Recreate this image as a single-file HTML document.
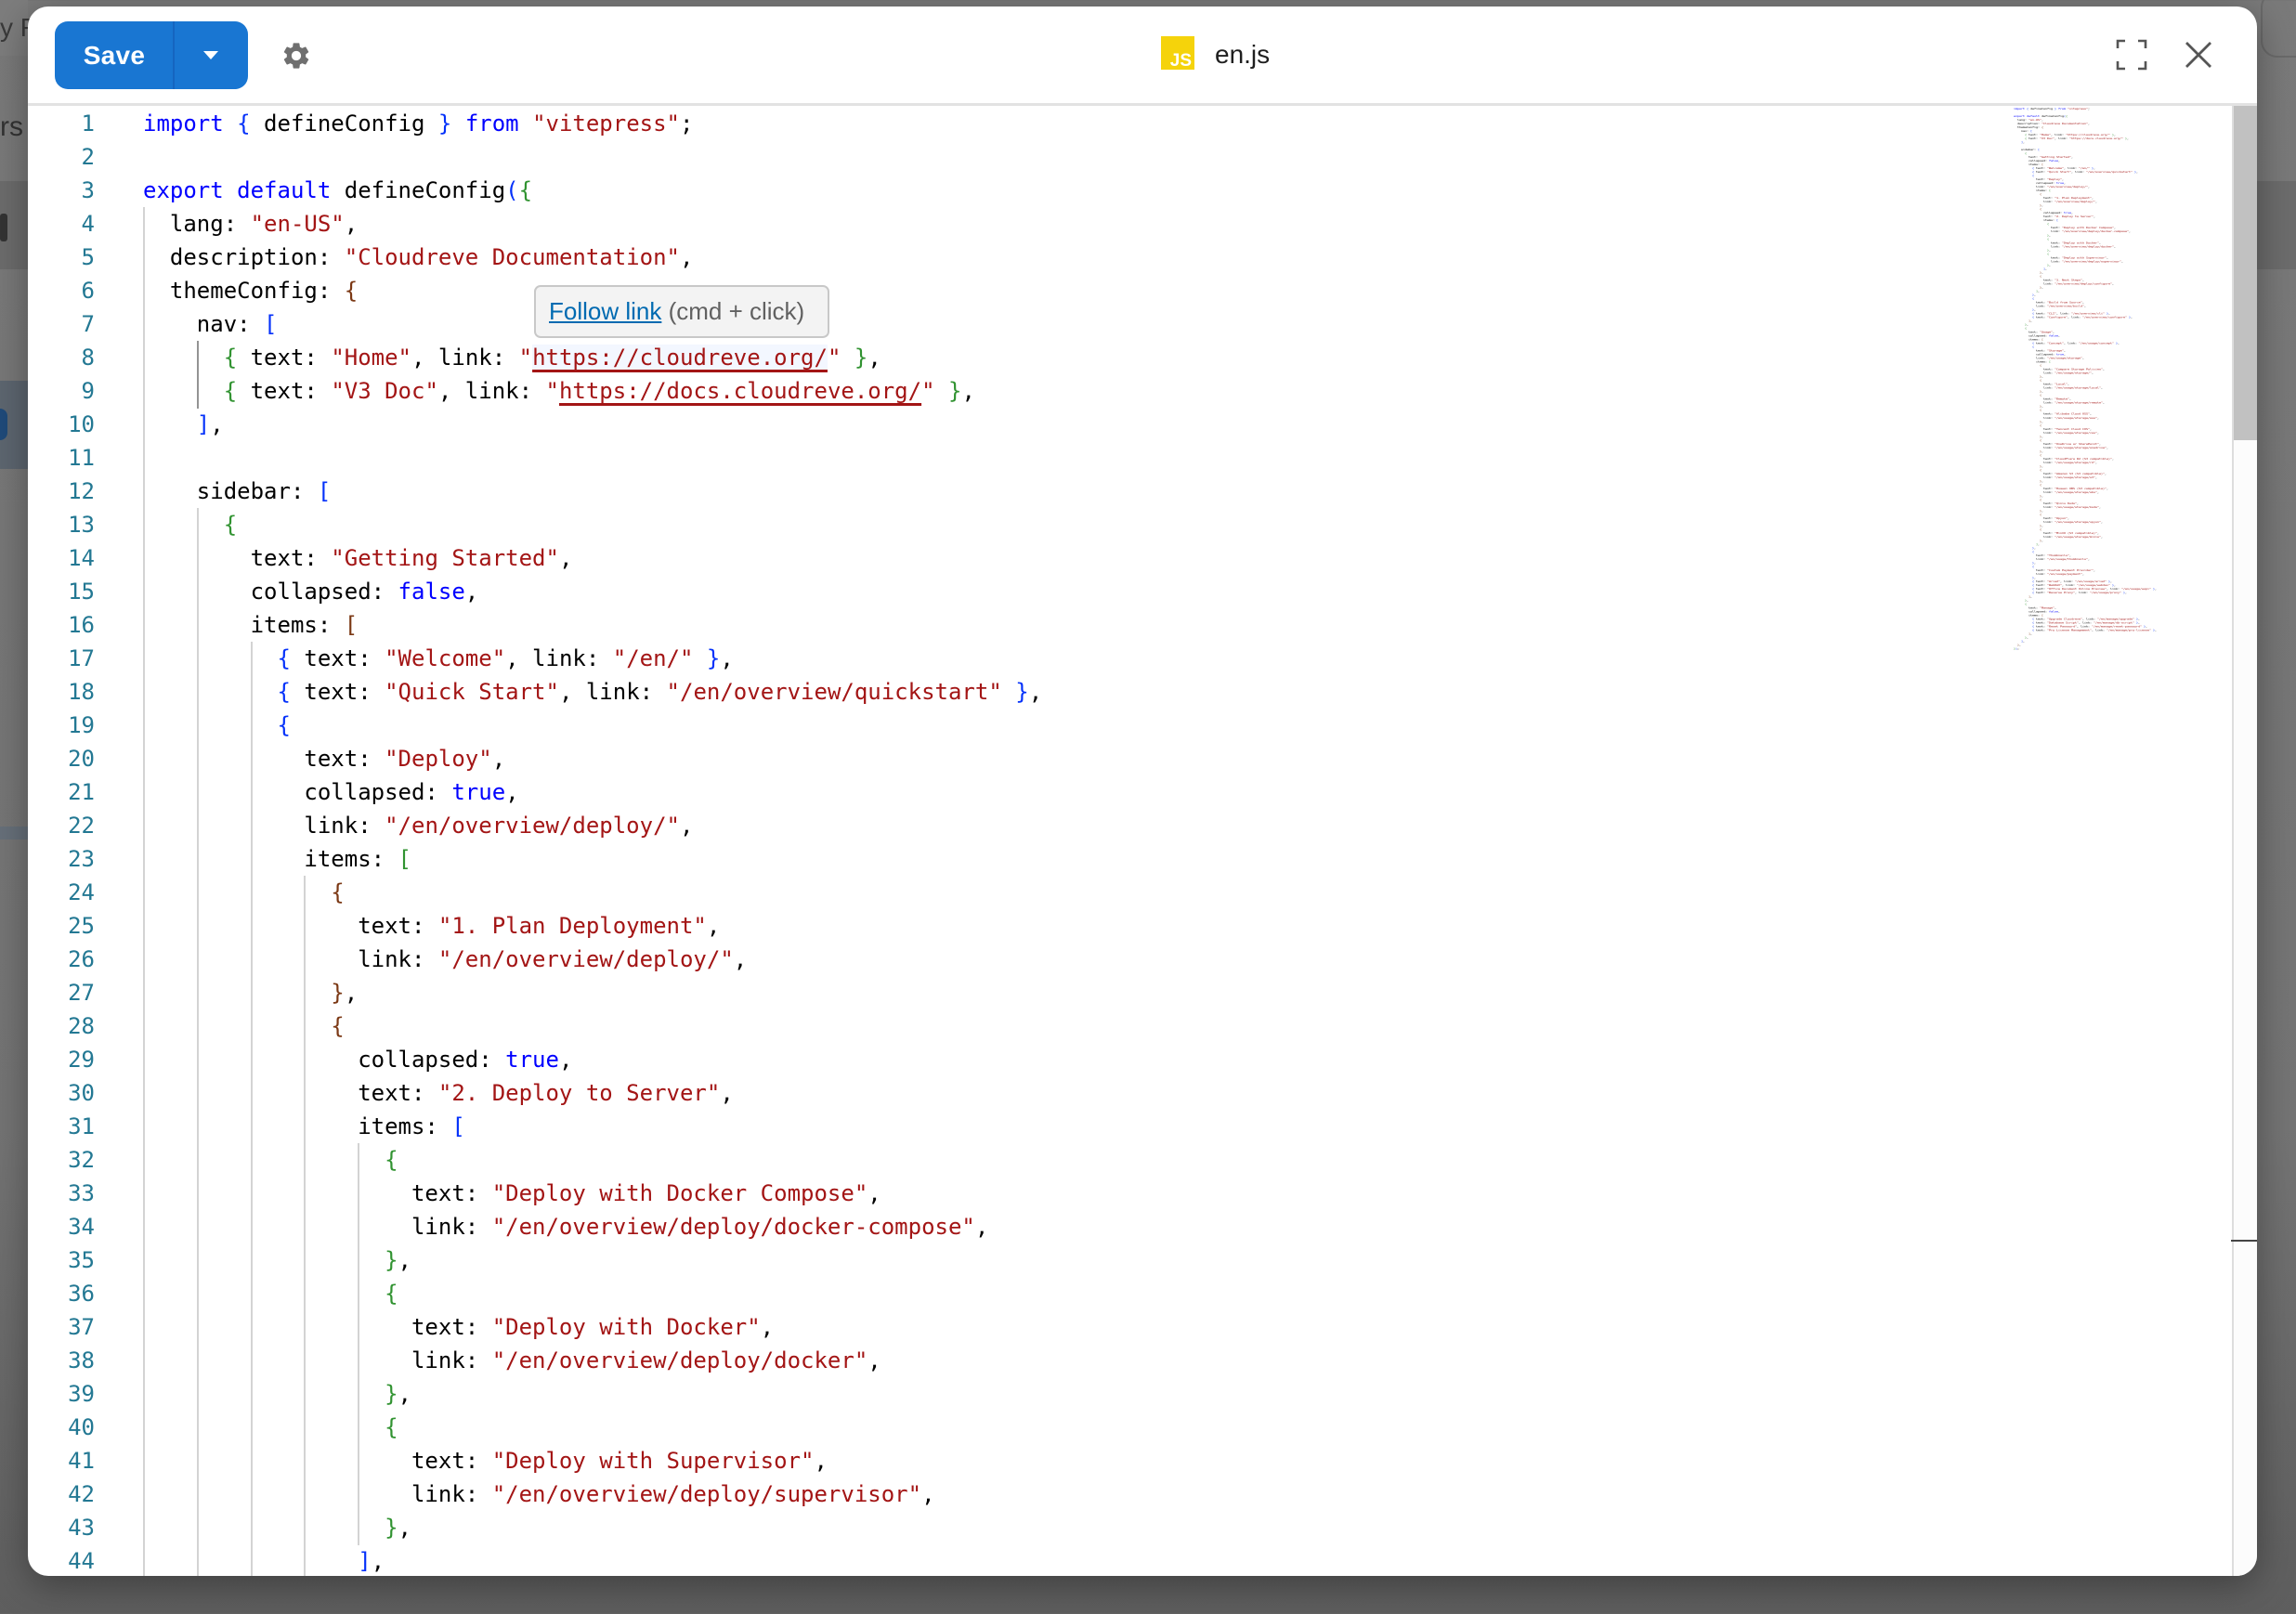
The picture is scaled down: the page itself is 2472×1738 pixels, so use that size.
<!DOCTYPE html>
<html><head><meta charset="utf-8">
<style>
html,body{margin:0;padding:0;}
body{width:2472px;height:1738px;overflow:hidden;position:relative;background:linear-gradient(#7a7a7a,#747474 70%,#5e5e5e);font-family:"Liberation Sans",sans-serif;}
.bgp{position:absolute;}
#dlg{position:absolute;left:30px;top:7px;width:2400px;height:1690px;background:#fff;border-radius:22px;overflow:hidden;box-shadow:0 10px 40px rgba(0,0,0,.35);}
#hdr{position:absolute;left:0;top:0;width:2400px;height:104px;border-bottom:3px solid #e2e2e2;}
#save{position:absolute;left:29px;top:16px;width:208px;height:73px;background:#1976d2;border-radius:14px;color:#fff;}
#save .t{position:absolute;left:0;top:0;width:128px;height:73px;line-height:73px;text-align:center;font-size:28px;font-weight:bold;letter-spacing:.3px}
#save .d{position:absolute;left:127px;top:0;width:2px;height:73px;background:#1565c0}
#save .c{position:absolute;left:160px;top:32px;width:0;height:0;border-left:8px solid transparent;border-right:8px solid transparent;border-top:9px solid #fff}
.code{position:absolute;font-family:"DejaVu Sans Mono","Liberation Mono",monospace;font-size:24px;color:#000;white-space:normal;}
.code div{height:36px;line-height:36px;white-space:pre;}
#gut{position:absolute;left:0;top:108px;width:72px;text-align:right;color:#237893;font-family:"DejaVu Sans Mono","Liberation Mono",monospace;font-size:24px;}
#gut div{height:36px;line-height:36px;}
#code{left:124px;top:108px;}
.k{color:#0000ff}.s{color:#a31515}.b1{color:#0431fa}.b2{color:#319331}.b3{color:#7b3814}
.u{text-decoration:underline;text-decoration-color:#a31515;text-decoration-thickness:3px;text-underline-offset:5px;background:#f3f7ff}
#guides .g{position:absolute;width:2px;background:#d3d3d3}
#mini{position:absolute;left:2138px;top:108px;transform-origin:0 0;transform:scale(0.1384,0.1114);}
#sb{position:absolute;left:2373px;top:107px;width:27px;height:1590px;background:#fcfcfc;border-left:2px solid #ddd}
#thumb{position:absolute;left:2375px;top:107px;width:27px;height:360px;background:#c1c1c1}
#tip{position:absolute;left:545px;top:300px;height:57px;background:#f3f3f3;border:2px solid #c8c8c8;border-radius:7px;font-size:26px;line-height:53px;padding-left:14px;box-sizing:border-box;width:318px;color:#616161;white-space:nowrap}
#tip a{color:#006ab1;text-decoration:underline}
</style></head><body>
<div class="bgp" style="left:0;top:0;width:30px;height:60px;background:#7d7d7d"></div>
<div class="bgp" style="left:0;top:14px;color:#3a3a3a;font-size:28px;">y F</div>
<div class="bgp" style="left:0;top:120px;color:#333;font-size:30px;">rs</div>
<div class="bgp" style="left:0;top:195px;width:30px;height:95px;background:#6c6c6c"></div>
<div class="bgp" style="left:0;top:230px;width:8px;height:30px;background:#333;border-radius:3px"></div>
<div class="bgp" style="left:0;top:410px;width:30px;height:95px;background:#5d6670"></div>
<div class="bgp" style="left:0;top:440px;width:8px;height:34px;background:#1f4a7a;border-radius:0 17px 17px 0"></div>
<div class="bgp" style="left:0;top:890px;width:30px;height:14px;background:#67707a"></div>
<div class="bgp" style="left:2430px;top:195px;width:42px;height:95px;background:#6c6c6c"></div>
<div class="bgp" style="left:2434px;top:-10px;width:60px;height:68px;border:2px solid #6a6a6a;border-radius:18px"></div>

<div id="dlg">
 <div id="hdr">
  <div id="save"><div class="t">Save</div><div class="d"></div><div class="c"></div></div>
  <svg style="position:absolute;left:272px;top:36px" width="34" height="34" viewBox="0 0 24 24"><path fill="#6f6f6f" d="M19.14 12.94c.04-.3.06-.61.06-.94 0-.32-.02-.64-.07-.94l2.030-1.58a.49.49 0 0 0 .12-.61l-1.920-3.32a.488.488 0 0 0-.59-.22l-2.39.96c-.5-.38-1.03-.7-1.62-.94l-.36-2.54a.484.484 0 0 0-.48-.41h-3.84c-.24 0-.43.17-.47.41l-.36 2.54c-.59.24-1.13.57-1.62.94l-2.39-.96c-.22-.08-.47 0-.59.22L2.74 8.87c-.12.21-.08.47.12.61l2.03 1.58c-.05.3-.09.63-.09.94s.02.64.07.94l-2.03 1.58a.49.49 0 0 0-.12.61l1.92 3.32c.12.22.37.29.59.22l2.39-.96c.5.38 1.03.7 1.62.94l.36 2.54c.05.24.24.41.48.41h3.84c.24 0 .44-.17.47-.41l.36-2.54c.59-.24 1.130-.56 1.62-.94l2.39.96c.22.08.47 0 .59-.22l1.92-3.320c.12-.22.07-.47-.12-.61l-2.01-1.58zM12 15.6c-1.98 0-3.6-1.62-3.6-3.6s1.62-3.6 3.6-3.6 3.6 1.62 3.6 3.6-1.62 3.6-3.6 3.6z"/></svg>
  <div style="position:absolute;left:1220px;top:32px;width:36px;height:36px;background:#f5d30b;"><span style="position:absolute;right:3px;bottom:0;font-size:19px;color:#fff;font-weight:bold;line-height:19px">JS</span></div>
  <div style="position:absolute;left:1278px;top:32px;font-size:28px;line-height:40px;color:#1f1f1f">en.js</div>
  <svg style="position:absolute;left:2248px;top:35px" width="34" height="34" viewBox="0 0 34 34" fill="none" stroke="#555" stroke-width="2.6"><path d="M2 10V2h8M24 2h8v8M32 24v8h-8M10 32H2v-8"/></svg>
  <svg style="position:absolute;left:2322px;top:37px" width="30" height="30" viewBox="0 0 30 30" stroke="#555" stroke-width="2.8"><path d="M2 2L28 28M28 2L2 28"/></svg>
 </div>

 <div id="gut"><div>1</div><div>2</div><div>3</div><div>4</div><div>5</div><div>6</div><div>7</div><div>8</div><div>9</div><div>10</div><div>11</div><div>12</div><div>13</div><div>14</div><div>15</div><div>16</div><div>17</div><div>18</div><div>19</div><div>20</div><div>21</div><div>22</div><div>23</div><div>24</div><div>25</div><div>26</div><div>27</div><div>28</div><div>29</div><div>30</div><div>31</div><div>32</div><div>33</div><div>34</div><div>35</div><div>36</div><div>37</div><div>38</div><div>39</div><div>40</div><div>41</div><div>42</div><div>43</div><div>44</div></div>

 <div id="guides"></div>

 <div id="code" class="code">
<div><span class="k">import</span> <span class="b1">{</span> defineConfig <span class="b1">}</span> <span class="k">from</span> <span class="s">"vitepress"</span>;</div>
<div></div>
<div><span class="k">export</span> <span class="k">default</span> defineConfig<span class="b1">(</span><span class="b2">{</span></div>
<div>  lang: <span class="s">"en-US"</span>,</div>
<div>  description: <span class="s">"Cloudreve Documentation"</span>,</div>
<div>  themeConfig: <span class="b3">{</span></div>
<div>    nav: <span class="b1">[</span></div>
<div>      <span class="b2">{</span> text: <span class="s">"Home"</span>, link: <span class="s">"<span class="u">https://cloudreve.org/</span>"</span> <span class="b2">}</span>,</div>
<div>      <span class="b2">{</span> text: <span class="s">"V3 Doc"</span>, link: <span class="s">"<span class="u" style="background:none">https://docs.cloudreve.org/</span>"</span> <span class="b2">}</span>,</div>
<div>    <span class="b1">]</span>,</div>
<div></div>
<div>    sidebar: <span class="b1">[</span></div>
<div>      <span class="b2">{</span></div>
<div>        text: <span class="s">"Getting Started"</span>,</div>
<div>        collapsed: <span class="k">false</span>,</div>
<div>        items: <span class="b3">[</span></div>
<div>          <span class="b1">{</span> text: <span class="s">"Welcome"</span>, link: <span class="s">"/en/"</span> <span class="b1">}</span>,</div>
<div>          <span class="b1">{</span> text: <span class="s">"Quick Start"</span>, link: <span class="s">"/en/overview/quickstart"</span> <span class="b1">}</span>,</div>
<div>          <span class="b1">{</span></div>
<div>            text: <span class="s">"Deploy"</span>,</div>
<div>            collapsed: <span class="k">true</span>,</div>
<div>            link: <span class="s">"/en/overview/deploy/"</span>,</div>
<div>            items: <span class="b2">[</span></div>
<div>              <span class="b3">{</span></div>
<div>                text: <span class="s">"1. Plan Deployment"</span>,</div>
<div>                link: <span class="s">"/en/overview/deploy/"</span>,</div>
<div>              <span class="b3">}</span>,</div>
<div>              <span class="b3">{</span></div>
<div>                collapsed: <span class="k">true</span>,</div>
<div>                text: <span class="s">"2. Deploy to Server"</span>,</div>
<div>                items: <span class="b1">[</span></div>
<div>                  <span class="b2">{</span></div>
<div>                    text: <span class="s">"Deploy with Docker Compose"</span>,</div>
<div>                    link: <span class="s">"/en/overview/deploy/docker-compose"</span>,</div>
<div>                  <span class="b2">}</span>,</div>
<div>                  <span class="b2">{</span></div>
<div>                    text: <span class="s">"Deploy with Docker"</span>,</div>
<div>                    link: <span class="s">"/en/overview/deploy/docker"</span>,</div>
<div>                  <span class="b2">}</span>,</div>
<div>                  <span class="b2">{</span></div>
<div>                    text: <span class="s">"Deploy with Supervisor"</span>,</div>
<div>                    link: <span class="s">"/en/overview/deploy/supervisor"</span>,</div>
<div>                  <span class="b2">}</span>,</div>
<div>                <span class="b1">]</span>,</div>
<div>              <span class="b3">}</span>,</div>
<div>              <span class="b3">{</span></div>
<div>                text: <span class="s">"3. Next Steps"</span>,</div>
<div>                link: <span class="s">"/en/overview/deploy/configure"</span>,</div>
<div>              <span class="b3">}</span>,</div>
<div>            <span class="b2">]</span>,</div>
<div>          <span class="b1">}</span>,</div>
<div>          <span class="b1">{</span></div>
<div>            text: <span class="s">"Build from Source"</span>,</div>
<div>            link: <span class="s">"/en/overview/build"</span>,</div>
<div>          <span class="b1">}</span>,</div>
<div>          <span class="b1">{</span> text: <span class="s">"CLI"</span>, link: <span class="s">"/en/overview/cli"</span> <span class="b1">}</span>,</div>
<div>          <span class="b1">{</span> text: <span class="s">"Configure"</span>, link: <span class="s">"/en/overview/configure"</span> <span class="b1">}</span>,</div>
<div>        <span class="b3">]</span>,</div>
<div>      <span class="b2">}</span>,</div>
<div>      <span class="b2">{</span></div>
<div>        text: <span class="s">"Usage"</span>,</div>
<div>        collapsed: <span class="k">false</span>,</div>
<div>        items: <span class="b3">[</span></div>
<div>          <span class="b1">{</span> text: <span class="s">"Concept"</span>, link: <span class="s">"/en/usage/concept"</span> <span class="b1">}</span>,</div>
<div>          <span class="b1">{</span></div>
<div>            text: <span class="s">"Storage"</span>,</div>
<div>            collapsed: <span class="k">true</span>,</div>
<div>            link: <span class="s">"/en/usage/storage"</span>,</div>
<div>            items: <span class="b2">[</span></div>
<div>              <span class="b3">{</span></div>
<div>                text: <span class="s">"Compare Storage Policies"</span>,</div>
<div>                link: <span class="s">"/en/usage/storage/"</span>,</div>
<div>              <span class="b3">}</span>,</div>
<div>              <span class="b3">{</span></div>
<div>                text: <span class="s">"Local"</span>,</div>
<div>                link: <span class="s">"/en/usage/storage/local"</span>,</div>
<div>              <span class="b3">}</span>,</div>
<div>              <span class="b3">{</span></div>
<div>                text: <span class="s">"Remote"</span>,</div>
<div>                link: <span class="s">"/en/usage/storage/remote"</span>,</div>
<div>              <span class="b3">}</span>,</div>
<div>              <span class="b3">{</span></div>
<div>                text: <span class="s">"Alibaba Cloud OSS"</span>,</div>
<div>                link: <span class="s">"/en/usage/storage/oss"</span>,</div>
<div>              <span class="b3">}</span>,</div>
<div>              <span class="b3">{</span></div>
<div>                text: <span class="s">"Tencent Cloud COS"</span>,</div>
<div>                link: <span class="s">"/en/usage/storage/cos"</span>,</div>
<div>              <span class="b3">}</span>,</div>
<div>              <span class="b3">{</span></div>
<div>                text: <span class="s">"OneDrive or SharePoint"</span>,</div>
<div>                link: <span class="s">"/en/usage/storage/onedrive"</span>,</div>
<div>              <span class="b3">}</span>,</div>
<div>              <span class="b3">{</span></div>
<div>                text: <span class="s">"CloudFlare R2 (S3 compatible)"</span>,</div>
<div>                link: <span class="s">"/en/usage/storage/r2"</span>,</div>
<div>              <span class="b3">}</span>,</div>
<div>              <span class="b3">{</span></div>
<div>                text: <span class="s">"Amazon S3 (S3 compatible)"</span>,</div>
<div>                link: <span class="s">"/en/usage/storage/s3"</span>,</div>
<div>              <span class="b3">}</span>,</div>
<div>              <span class="b3">{</span></div>
<div>                text: <span class="s">"Huawei OBS (S3 compatible)"</span>,</div>
<div>                link: <span class="s">"/en/usage/storage/obs"</span>,</div>
<div>              <span class="b3">}</span>,</div>
<div>              <span class="b3">{</span></div>
<div>                text: <span class="s">"Qiniu Kodo"</span>,</div>
<div>                link: <span class="s">"/en/usage/storage/kodo"</span>,</div>
<div>              <span class="b3">}</span>,</div>
<div>              <span class="b3">{</span></div>
<div>                text: <span class="s">"Upyun"</span>,</div>
<div>                link: <span class="s">"/en/usage/storage/upyun"</span>,</div>
<div>              <span class="b3">}</span>,</div>
<div>              <span class="b3">{</span></div>
<div>                text: <span class="s">"MinIO (S3 compatible)"</span>,</div>
<div>                link: <span class="s">"/en/usage/storage/minio"</span>,</div>
<div>              <span class="b3">}</span>,</div>
<div>            <span class="b2">]</span>,</div>
<div>          <span class="b1">}</span>,</div>
<div>          <span class="b1">{</span></div>
<div>            text: <span class="s">"Thumbnails"</span>,</div>
<div>            link: <span class="s">"/en/usage/thumbnails"</span>,</div>
<div>          <span class="b1">}</span>,</div>
<div>          <span class="b1">{</span></div>
<div>            text: <span class="s">"Custom Payment Provider"</span>,</div>
<div>            link: <span class="s">"/en/usage/payment"</span>,</div>
<div>          <span class="b1">}</span>,</div>
<div>          <span class="b1">{</span> text: <span class="s">"Aria2"</span>, link: <span class="s">"/en/usage/aria2"</span> <span class="b1">}</span>,</div>
<div>          <span class="b1">{</span> text: <span class="s">"WebDAV"</span>, link: <span class="s">"/en/usage/webdav"</span> <span class="b1">}</span>,</div>
<div>          <span class="b1">{</span> text: <span class="s">"Office Document Online Preview"</span>, link: <span class="s">"/en/usage/wopi"</span> <span class="b1">}</span>,</div>
<div>          <span class="b1">{</span> text: <span class="s">"Reverse Proxy"</span>, link: <span class="s">"/en/usage/proxy"</span> <span class="b1">}</span>,</div>
<div>        <span class="b3">]</span>,</div>
<div>      <span class="b2">}</span>,</div>
<div>      <span class="b2">{</span></div>
<div>        text: <span class="s">"Manage"</span>,</div>
<div>        collapsed: <span class="k">false</span>,</div>
<div>        items: <span class="b3">[</span></div>
<div>          <span class="b1">{</span> text: <span class="s">"Upgrade Cloudreve"</span>, link: <span class="s">"/en/manage/upgrade"</span> <span class="b1">}</span>,</div>
<div>          <span class="b1">{</span> text: <span class="s">"Database Script"</span>, link: <span class="s">"/en/manage/db-script"</span> <span class="b1">}</span>,</div>
<div>          <span class="b1">{</span> text: <span class="s">"Reset Password"</span>, link: <span class="s">"/en/manage/reset-password"</span> <span class="b1">}</span>,</div>
<div>          <span class="b1">{</span> text: <span class="s">"Pro License Management"</span>, link: <span class="s">"/en/manage/pro-license"</span> <span class="b1">}</span>,</div>
<div>        <span class="b3">]</span>,</div>
<div>      <span class="b2">}</span>,</div>
<div>    <span class="b1">]</span>,</div>
<div>  <span class="b3">}</span>,</div>
<div><span class="b2">}</span><span class="b1">)</span>;</div>
 </div>

 <div id="mini" class="code"></div>
 <div id="sb"></div>
 <div id="thumb"></div>
 <div style="position:absolute;left:2372px;top:1328px;width:28px;height:2px;background:#444"></div>

 <div id="tip"><a>Follow link</a> (cmd + click)</div>
</div>

<script>
(function(){
 var code=document.getElementById('code');
 var mini=document.getElementById('mini');
 mini.innerHTML=code.innerHTML;
 var us=mini.querySelectorAll('.u');for(var i=0;i<us.length;i++){us[i].style.textDecoration='none';us[i].style.background='none';}
 var lines=code.children, ind=[];
 for(var i=0;i<lines.length;i++){var t=lines[i].textContent;ind.push(t.trim()===''?-1:t.match(/^ */)[0].length);}
 for(var i=0;i<ind.length;i++){if(ind[i]<0){var a=0,b=0;for(var j=i-1;j>=0;j--)if(ind[j]>=0){a=ind[j];break;}for(var j=i+1;j<ind.length;j++)if(ind[j]>=0){b=ind[j];break;}ind[i]=Math.min(a,b);}}
 var g=document.getElementById('guides'),cw=14.45,lh=36;
 for(var i=0;i<Math.min(ind.length,46);i++){
  for(var c=0;c<ind[i];c+=4){
   var d=document.createElement('div');d.className='g';
   d.style.left=(124+c*cw)+'px';d.style.top=(108+i*lh)+'px';d.style.height=(lh+0.5)+'px';
   if(c===4&&(i===7||i===8))d.style.background='#939393';
   g.appendChild(d);
  }
 }
})();
</script>
</body></html>
